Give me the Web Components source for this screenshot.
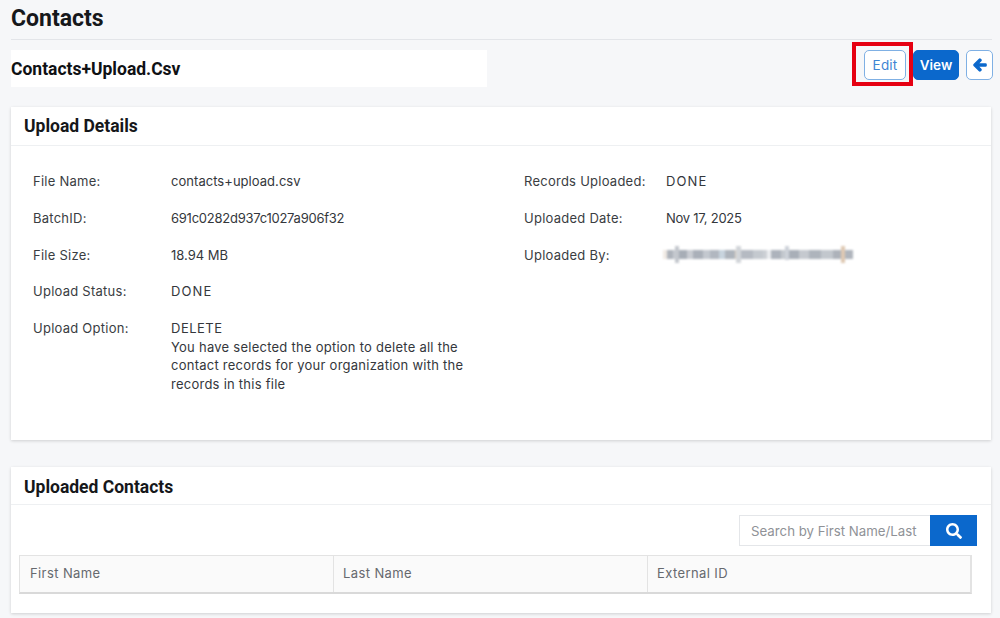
<!DOCTYPE html>
<html>
<head>
<meta charset="utf-8">
<title>Contacts</title>
<style>
html, body { margin: 0; height: 618px; overflow: hidden; background: #f6f7f9; }
body { font-family: Inter, "Open Sans", sans-serif; color: #333; }
</style>
</head>
<body>
<contacts-page></contacts-page>

<template id="page-tpl">
  <style>
    :host { display: block; padding: 0 9px 0 11px; }
    h1 { margin: 0; font: 700 23px/37px Roboto, sans-serif; color: #16181b; height: 39px; border-bottom: 1px solid #e3e5e9; margin-right: -1px; box-sizing: content-box; }
    .bar { display: flex; justify-content: space-between; align-items: flex-start; padding-top: 10px; height: 47px; margin-bottom: 10px; }
    .file { width: 476px; height: 37px; background: #fff; font: 700 17.500px/38px Roboto, sans-serif; color: #0f1114; }
    .actions { display: flex; gap: 7px; margin-right: -2px; }
    .stack { display: flex; flex-direction: column; gap: 27px; }
    dl { margin: 0; display: grid; grid-template-columns: 491px 1fr; padding: 26px 22px 0; height: 267px; }
    .col { display: flex; flex-direction: column; gap: 18.300px; }
    .col.right { --label-w: 142px; }
    .caps { letter-spacing: .5px; }
    .blur { display: block; width: 192px; height: 19px; margin: -1px 0 0 -3px; filter: blur(1px);
      background:
        linear-gradient(#c3c7cd, #c3c7cd) 12px 1px / 4px 17px no-repeat,
        linear-gradient(#d2d5d9, #d2d5d9) 73px 1px / 5px 17px no-repeat,
        linear-gradient(#cdd2d9, #cdd2d9) 122px 1px / 4px 14px no-repeat,
        linear-gradient(#dfc9b3, #dfc9b3) 178px 1px / 4px 17px no-repeat,
        linear-gradient(90deg, #f1ebe4 0 4px, #aeb3bb 4px 10px, #c6cad0 10px 16px, #a7adb6 16px 24px, #c9ccd2 24px 30px, #aab0b9 30px 40px, #c3c8cf 40px 47px, #b1b7c0 47px 56px, #c8d4de 56px 62px, #aeb4bc 62px 72px, #e0d3c4 72px 78px, #b5bac2 78px 90px, #c4c9cf 90px 100px, #ccd0d5 100px 104px, #eceef0 104px 108px, #adb3bc 108px 118px, #c3c8ce 118px 126px, #a9afb8 126px 136px, #c5c9cf 136px 146px, #aeb4bc 146px 158px, #c2c7cd 158px 170px, #adb2ba 170px 178px, #dcc4ad 178px 182px, #b0b5bd 182px 190px, #fff 190px) 0 5px / 100% 9px no-repeat;
    }
    .tools { display: flex; justify-content: flex-end; padding: 10px 14px 9px 0; }
    .table { margin: 0 8px; padding: 0 11px 0 0; }
  </style>
  <h1>Contacts</h1>
  <div class="bar">
    <div class="file">Contacts+Upload.Csv</div>
    <div class="actions">
      <action-button kind="outline" marked>Edit</action-button>
      <action-button kind="solid">View</action-button>
      <action-button kind="icon">
        <svg width="14" height="14" viewBox="0 0 448 512" fill="#0b68cc" stroke="#0b68cc" stroke-width="50" stroke-linejoin="round"><path d="M257.500 445.100l-22.200 22.200c-9.400 9.400-24.600 9.400-33.900 0L7 273c-9.400-9.400-9.400-24.600 0-33.900L201.400 44.700c9.400-9.400 24.600-9.400 33.900 0l22.200 22.200c9.500 9.500 9.300 25-.4 34.300L136.600 216H424c13.300 0 24 10.700 24 24v32c0 13.300-10.700 24-24 24H136.600l120.500 114.800c9.800 9.300 10 24.800.4 34.300z"/></svg>
      </action-button>
    </div>
  </div>
  <div class="stack">
    <section-card heading="Upload Details" style="--card-h:333px; --head-h:38px">
      <dl>
        <div class="col">
          <detail-row label="File Name:" style="--ls:.04px">contacts+upload.csv</detail-row>
          <detail-row label="BatchID:" style="--ls:-.25px">691c0282d937c1027a906f32</detail-row>
          <detail-row label="File Size:" style="--ls:0">18.94 MB</detail-row>
          <detail-row label="Upload Status:" style="--ls:1.100px">DONE</detail-row>
          <detail-row label="Upload Option:"><span class="caps">DELETE</span><br>You have selected the option to delete all the<br>contact records for your organization with the<br>records in this file</detail-row>
        </div>
        <div class="col right">
          <detail-row label="Records Uploaded:" style="--ls:1.100px">DONE</detail-row>
          <detail-row label="Uploaded Date:" style="--ls:-.25px">Nov 17, 2025</detail-row>
          <detail-row label="Uploaded By:"><span class="blur"></span></detail-row>
        </div>
      </dl>
    </section-card>
    <section-card heading="Uploaded Contacts" style="--card-h:146px; --title-lh:40px">
      <div class="tools"><search-box placeholder="Search by First Name/Last"></search-box></div>
      <contacts-table class="table"></contacts-table>
    </section-card>
  </div>
</template>

<script>
function fromTemplate(el, id) {
  el.attachShadow({ mode: 'open' }).appendChild(document.getElementById(id).content.cloneNode(true))
}

class ContactsPage extends HTMLElement {
  connectedCallback() {
    fromTemplate(this, 'page-tpl')
  }
}

class ActionButton extends HTMLElement {
  connectedCallback() {
    const marked = this.hasAttribute('marked')
    this.attachShadow({ mode: 'open' }).innerHTML = `
      <style>
        :host { display: block; position: relative; }
        button { display: flex; align-items: center; justify-content: center; height: 30px; box-sizing: border-box; border-radius: 5px; font: 500 13.500px Inter, sans-serif; padding: 0; cursor: pointer; }
        :host([kind=outline]) button { width: 42px; background: #fff; border: 1px solid #7fb0e4; color: #3f86d3; font-weight: 400; letter-spacing: .2px; }
        :host([kind=solid]) button { width: 46px; background: #0b68cc; border: 1px solid #0b68cc; color: #fff; font-weight: 600; }
        :host([kind=icon]) button { width: 27px; background: #fff; border: 1px solid #7fb0e4; }
        .mark { position: absolute; left: -12px; top: -8px; width: 61px; height: 44px; box-sizing: border-box; border: 4px solid #e60012; pointer-events: none; }
      </style>
      <button><slot></slot></button>
      ${marked ? '<div class="mark"></div>' : ''}`
  }
}

class SectionCard extends HTMLElement {
  connectedCallback() {
    this.attachShadow({ mode: 'open' }).innerHTML = `
      <style>
        :host { display: block; height: var(--card-h); background: #fff; box-shadow: 0 1px 3px rgba(0,0,0,.16); overflow: hidden; }
        h2 { margin: 0; height: var(--head-h, 37px); padding-left: 13px; font: 700 17.500px/var(--title-lh, 38px) Roboto, sans-serif; color: #15171a; border-bottom: 1px solid #eef0f2; }
      </style>
      <h2>${this.getAttribute('heading')}</h2>
      <slot></slot>`
  }
}

class DetailRow extends HTMLElement {
  connectedCallback() {
    this.attachShadow({ mode: 'open' }).innerHTML = `
      <style>
        :host { display: flex; font: 400 13px/18.500px Inter, sans-serif; color: #3a3d42; letter-spacing: .25px; }
        .label { flex: none; width: var(--label-w, 138px); }
        .value { color: #34373c; letter-spacing: var(--ls, .25px); white-space: nowrap; }
      </style>
      <div class="label">${this.getAttribute('label')}</div>
      <div class="value"><slot></slot></div>`
  }
}

class SearchBox extends HTMLElement {
  connectedCallback() {
    this.attachShadow({ mode: 'open' }).innerHTML = `
      <style>
        :host { display: flex; height: 31px; }
        input { width: 191px; box-sizing: border-box; border: 1px solid #e4e6e9; border-right: 0; padding: 0 0 0 11px; outline: none; font: 400 13.250px Inter, sans-serif; background: #fff; }
        input::placeholder { color: #8f9297; opacity: 1; }
        button { width: 47px; background: #0b68cc; border: 0; padding: 0; display: flex; align-items: center; justify-content: center; }
      </style>
      <input placeholder="${this.getAttribute('placeholder')}">
      <button><svg width="16" height="16" viewBox="0 0 512 512" fill="#fff"><path d="M505 442.700L405.300 343c-4.500-4.500-10.600-7-17-7H372c27.600-35.300 44-79.700 44-128C416 93.100 322.900 0 208 0S0 93.100 0 208s93.100 208 208 208c48.300 0 92.700-16.400 128-44v16.300c0 6.400 2.500 12.500 7 17l99.700 99.700c9.400 9.400 24.600 9.400 33.900 0l28.300-28.300c9.400-9.400 9.400-24.600.1-34zM208 336c-70.700 0-128-57.200-128-128 0-70.700 57.200-128 128-128 70.700 0 128 57.200 128 128 0 70.700-57.200 128-128 128z"/></svg></button>`
  }
}

class ContactsTable extends HTMLElement {
  connectedCallback() {
    const cols = ['First Name', 'Last Name', 'External ID']
    this.attachShadow({ mode: 'open' }).innerHTML = `
      <style>
        :host { display: block; }
        .head { display: grid; grid-template-columns: 314px 314px 323px; height: 39px; box-sizing: border-box; background: #fafafa; border: 1px solid #e3e3e3; border-bottom: 2px solid #d9d9d9; border-right-width: 2px; }
        .head div { padding-left: 9px; font: 400 13px/35px Inter, sans-serif; letter-spacing: .4px; color: #66696e; border-right: 1px solid #e3e3e3; }
        .head div:first-child { padding-left: 10px; }
        .head div:last-child { border-right: 0; }
      </style>
      <div class="head">${cols.map(c => `<div>${c}</div>`).join('')}</div>`
  }
}

customElements.define('contacts-page', ContactsPage)
customElements.define('action-button', ActionButton)
customElements.define('section-card', SectionCard)
customElements.define('detail-row', DetailRow)
customElements.define('search-box', SearchBox)
customElements.define('contacts-table', ContactsTable)
</script>
</body>
</html>
